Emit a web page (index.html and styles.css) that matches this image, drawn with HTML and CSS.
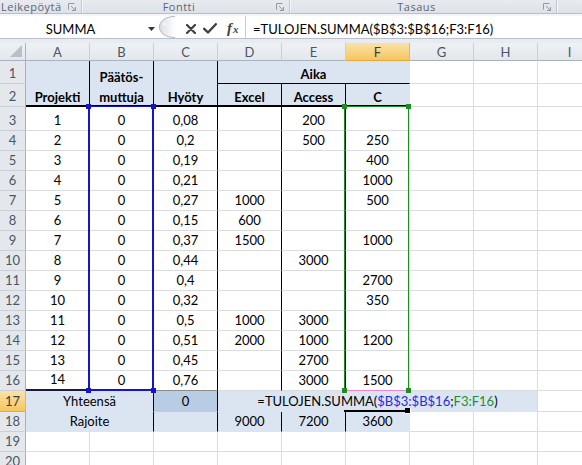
FILE: index.html
```html
<!DOCTYPE html>
<html>
<head>
<meta charset="utf-8">
<link rel="stylesheet" href="styles.css">
</head>
<body>
<div class="ribbon">
  <div class="grp g1"><span class="glabel left">Leikepöytä</span><svg class="launcher" width="8" height="8" viewBox="0 0 8 8"><path d="M0.5 6.5V0.5H6.5M3 3L7 7M7.5 4V7.5H4" fill="none" stroke="#8f99a6" stroke-width="1"/></svg></div>
  <div class="grp g2"><span class="glabel">Fontti</span><svg class="launcher" width="8" height="8" viewBox="0 0 8 8"><path d="M0.5 6.5V0.5H6.5M3 3L7 7M7.5 4V7.5H4" fill="none" stroke="#8f99a6" stroke-width="1"/></svg></div>
  <div class="grp g3"><span class="glabel">Tasaus</span><svg class="launcher" width="8" height="8" viewBox="0 0 8 8"><path d="M0.5 6.5V0.5H6.5M3 3L7 7M7.5 4V7.5H4" fill="none" stroke="#8f99a6" stroke-width="1"/></svg></div>
  <div class="grp g4"></div>
</div>
<div class="fspace"></div>
<div class="fbar">
  <div class="namebox"><span class="nbtext">SUMMA</span><svg class="nbarrow" width="7" height="4" viewBox="0 0 7 4"><path d="M0 0H7L3.5 4Z" fill="#333"/></svg></div>
  <svg class="grip" width="20" height="22" viewBox="0 0 20 22">
    <defs><linearGradient id="gg" x1="0" y1="0" x2="1" y2="0"><stop offset="0" stop-color="#d9dde3"/><stop offset="1" stop-color="#ffffff"/></linearGradient></defs>
    <path d="M17 0.5C6 0.5 1.5 6 1.5 11C1.5 16 6 21.5 17 21.5" fill="url(#gg)" stroke="#b3bac4" stroke-width="1"/>
    <ellipse cx="6.5" cy="8" rx="2" ry="1.5" fill="#f4f6f8"/>
  </svg>
  <div class="fbtns">
    <svg class="ix" width="10" height="10" viewBox="0 0 10 10"><path d="M1 1L9 9M9 1L1 9" stroke="#3f3f3f" stroke-width="2.2" stroke-linecap="round"/></svg>
    <svg class="iv" width="14" height="11" viewBox="0 0 14 11"><path d="M1.2 5.8L5 9.5L12.8 1.2" fill="none" stroke="#3f3f3f" stroke-width="2.4" stroke-linecap="round" stroke-linejoin="round"/></svg>
    <span class="fx"><i>f</i><span class="fxx">x</span></span>
  </div>
  <div class="finput">=TULOJEN.SUMMA($B$3:$B$16;F3:F16)</div>
</div>
<div class="fgap"></div>
<div class="sheet">
  <div class="corner"><svg width="14" height="14" viewBox="0 0 14 14"><path d="M1 13L13 1V13Z" fill="#b8bfc8"/></svg></div>
  <div class="ch">A</div><div class="ch">B</div><div class="ch">C</div><div class="ch">D</div><div class="ch">E</div><div class="ch sel">F</div><div class="ch">G</div><div class="ch">H</div><div class="ch">I</div>

  <div class="rh">1</div>
  <div class="c fill kr kb b p0 r2">Projekti</div>
  <div class="c fill kr kb b p0 r2 wrap"><span>Päätös-</span><span>muttuja</span></div>
  <div class="c fill kr kb b p0 r2">Hyöty</div>
  <div class="c fill kb1 b p1 s3">Aika</div>
  <div class="c"></div><div class="c"></div><div class="c"></div>

  <div class="rh">2</div>
  <div class="c fill kr kb b p0">Excel</div>
  <div class="c fill kr kb b p0">Access</div>
  <div class="c fill kb b p0">C</div>
  <div class="c"></div><div class="c"></div><div class="c"></div>

  <div class="rh">3</div><div class="c">1</div><div class="c">0</div><div class="c kr">0,08</div><div class="c kr"></div><div class="c kr">200</div><div class="c"></div><div class="c"></div><div class="c"></div><div class="c"></div>
  <div class="rh">4</div><div class="c">2</div><div class="c">0</div><div class="c kr">0,2</div><div class="c kr"></div><div class="c kr">500</div><div class="c">250</div><div class="c"></div><div class="c"></div><div class="c"></div>
  <div class="rh">5</div><div class="c">3</div><div class="c">0</div><div class="c kr">0,19</div><div class="c kr"></div><div class="c kr"></div><div class="c">400</div><div class="c"></div><div class="c"></div><div class="c"></div>
  <div class="rh">6</div><div class="c">4</div><div class="c">0</div><div class="c kr">0,21</div><div class="c kr"></div><div class="c kr"></div><div class="c">1000</div><div class="c"></div><div class="c"></div><div class="c"></div>
  <div class="rh">7</div><div class="c">5</div><div class="c">0</div><div class="c kr">0,27</div><div class="c kr">1000</div><div class="c kr"></div><div class="c">500</div><div class="c"></div><div class="c"></div><div class="c"></div>
  <div class="rh">8</div><div class="c">6</div><div class="c">0</div><div class="c kr">0,15</div><div class="c kr">600</div><div class="c kr"></div><div class="c"></div><div class="c"></div><div class="c"></div><div class="c"></div>
  <div class="rh">9</div><div class="c">7</div><div class="c">0</div><div class="c kr">0,37</div><div class="c kr">1500</div><div class="c kr"></div><div class="c">1000</div><div class="c"></div><div class="c"></div><div class="c"></div>
  <div class="rh">10</div><div class="c">8</div><div class="c">0</div><div class="c kr">0,44</div><div class="c kr"></div><div class="c kr">3000</div><div class="c"></div><div class="c"></div><div class="c"></div><div class="c"></div>
  <div class="rh">11</div><div class="c">9</div><div class="c">0</div><div class="c kr">0,4</div><div class="c kr"></div><div class="c kr"></div><div class="c">2700</div><div class="c"></div><div class="c"></div><div class="c"></div>
  <div class="rh">12</div><div class="c">10</div><div class="c">0</div><div class="c kr">0,32</div><div class="c kr"></div><div class="c kr"></div><div class="c">350</div><div class="c"></div><div class="c"></div><div class="c"></div>
  <div class="rh">13</div><div class="c">11</div><div class="c">0</div><div class="c kr">0,5</div><div class="c kr">1000</div><div class="c kr">3000</div><div class="c"></div><div class="c"></div><div class="c"></div><div class="c"></div>
  <div class="rh">14</div><div class="c">12</div><div class="c">0</div><div class="c kr">0,51</div><div class="c kr">2000</div><div class="c kr">1000</div><div class="c">1200</div><div class="c"></div><div class="c"></div><div class="c"></div>
  <div class="rh">15</div><div class="c">13</div><div class="c">0</div><div class="c kr">0,45</div><div class="c kr"></div><div class="c kr">2700</div><div class="c"></div><div class="c"></div><div class="c"></div><div class="c"></div>
  <div class="rh">16</div><div class="c a16">14</div><div class="c">0</div><div class="c kr c16">0,76</div><div class="c kr"></div><div class="c kr">3000</div><div class="c">1500</div><div class="c"></div><div class="c"></div><div class="c"></div>

  <div class="rh sel">17</div>
  <div class="c fill kr s2">Yhteensä</div>
  <div class="c dark kr">0</div>
  <div class="c fill s5 editor">=TULOJEN.SUMMA(<span class="refb">$B$3:$B$16</span>;<span class="refg">F3:F16</span>)</div>
  <div class="c"></div>

  <div class="rh">18</div>
  <div class="c fill kr s2">Rajoite</div>
  <div class="c fill kr"></div>
  <div class="c fill kr">9000</div>
  <div class="c fill kr">7200</div>
  <div class="c fill">3600</div>
  <div class="c"></div><div class="c"></div><div class="c"></div>

  <div class="rh">19</div><div class="c"></div><div class="c"></div><div class="c"></div><div class="c"></div><div class="c"></div><div class="c"></div><div class="c"></div><div class="c"></div><div class="c"></div>
  <div class="rh">20</div><div class="c"></div><div class="c"></div><div class="c"></div><div class="c"></div><div class="c"></div><div class="c"></div><div class="c"></div><div class="c"></div><div class="c"></div>

  <div class="range blue"><b class="ln lt"></b><b class="ln ll"></b><b class="ln lr"></b><b class="ln lb"></b><i class="h tl"></i><i class="h tr"></i><i class="h bl"></i><i class="h br"></i></div>
  <div class="range green"><b class="ln lt"></b><b class="ln ll"></b><b class="ln lr"></b><b class="ln lb pink"></b><i class="h tl"></i><i class="h tr"></i><i class="h bl"></i><i class="h br"></i></div>
  <div class="cursor"><i class="fillh"></i></div>
</div>
</body>
</html>
```
FILE: styles.css
```css
html, body { margin: 0; padding: 0; }
body {
  width: 582px;
  height: 465px;
  overflow: hidden;
  background: #ffffff;
  font-family: Lato, "Liberation Sans", sans-serif;
  color: #000;
}

/* ribbon group labels */
.ribbon {
  display: flex;
  height: 13px;
  background: linear-gradient(#e7ebf0, #dde2e8);
  border-bottom: 1px solid #b8bfc8;
  font-family: "Open Sans", "DejaVu Sans", sans-serif;
  font-size: 11px;
  letter-spacing: 0.5px;
  line-height: 13px;
  color: #5b6572;
  white-space: nowrap;
}
.grp {
  display: flex;
  align-items: center;
  border-right: 1px solid #c3c9d1;
  box-shadow: 1px 0 0 #f3f5f8;
}
.g1 { width: 81px; }
.g2 { width: 207px; }
.g3 { width: 266px; }
.g4 { flex: 1; border-right: none; box-shadow: none; }
.glabel { flex: 1; text-align: center; }
.glabel.left { text-align: left; padding-left: 1px; }
.launcher { margin-right: 5px; flex: none; }

.fspace { height: 2px; background: #f3f5f8; }

/* formula bar */
.fbar {
  display: flex;
  height: 22px;
  background: #ffffff;
  border-bottom: 1px solid #b9c0c9;
}
.namebox {
  width: 157px;
  display: flex;
  align-items: center;
  padding-top: 3px;
  box-sizing: border-box;
}
.nbtext { width: 141px; text-align: center; font-size: 13px; }
.nbarrow { margin-left: 7px; margin-top: 1px; }
.grip { margin-left: 1px; flex: none; }
.fbtns {
  display: flex;
  align-items: center;
  width: 67px;
  padding-top: 3px;
  box-sizing: border-box;
}
.ix { margin-left: 8px; }
.iv { margin-left: 7px; }
.fx {
  margin-left: 10px;
  font-family: "Liberation Serif", serif;
  font-weight: 700;
  font-size: 15px;
  color: #3f3f3f;
  line-height: 15px;
}
.fxx { font-style: italic; font-size: 11px; margin-left: 1px; }
.finput {
  flex: 1;
  border-left: 1px solid #c6ccd4;
  padding-left: 7px;
  padding-top: 3px;
  display: flex;
  align-items: center;
  font-size: 13px;
  white-space: nowrap;
}

.fgap { height: 4px; background: #e8ebf0; }

/* sheet */
.sheet {
  position: relative;
  display: grid;
  grid-template-columns: 26px repeat(9, 64px);
  grid-template-rows: 18px 23px 23px 24px repeat(13, 20px) 21px 20px 20px 20px;
  font-size: 13px;
}
.corner, .ch, .rh {
  box-sizing: border-box;
  background: linear-gradient(#eef1f4, #e3e7ec);
  color: #4a5565;
}
.corner {
  border-right: 1px solid #a9b3c0;
  border-bottom: 1px solid #a9b3c0;
  display: flex;
  align-items: flex-end;
  justify-content: flex-end;
  padding: 0 2px 2px 0;
}
.ch {
  border-right: 1px solid #cbd0d8;
  border-bottom: 1px solid #a9b3c0;
  display: flex;
  justify-content: center;
  align-items: flex-start;
  padding-top: 2px;
  line-height: 15px;
}
.rh {
  background: #e4e8ed;
  border-right: 1px solid #a9b3c0;
  border-bottom: 1px solid #cbd0d8;
  display: flex;
  justify-content: center;
  align-items: flex-end;
  padding-bottom: 2px;
  line-height: 15px;
}
.ch.sel, .rh.sel {
  background: linear-gradient(#fae3a9, #f5c65f);
  border-right-color: #e9b655;
  border-bottom-color: #e7a93c;
  color: #3d3d3d;
}

.c {
  box-sizing: border-box;
  border-right: 1px solid #dadcdd;
  border-bottom: 1px solid #dadcdd;
  display: flex;
  justify-content: center;
  align-items: flex-end;
  line-height: 15px;
  padding-bottom: 2px;
  white-space: nowrap;
}
.fill { background: #dbe5f1; border-color: #dbe5f1; }
.dark { background: #b8cce4; border-color: #b8cce4; }
.kr { border-right-color: #000; }
.kb { border-bottom: 2px solid #000; }
.kb1 { border-bottom-color: #000; }
.b { font-weight: 700; }
.p0 { padding-bottom: 0; }
.p1 { padding-bottom: 1px; }
.r2 { grid-row: span 2; }
.s2 { grid-column: span 2; }
.s3 { grid-column: span 3; }
.s5 { grid-column: span 5; }
.wrap { flex-direction: column; align-items: center; justify-content: flex-end; gap: 5px; }
.a16 { border-bottom: 2px solid #1a1a40; }
.c16 { border-bottom-color: #8c8c8c; }
.editor { border-right-color: #dadcdd; }
.refb { color: #2a2ae0; }
.refg { color: #22902a; }

/* overlays: reference-range highlights drawn over the grid */
.range {
  position: absolute;
  top: 63px;
  width: 66px;
  height: 285px;
  z-index: 2;
  pointer-events: none;
}
.range.blue { left: 88px; --rc: #1414c8; }
.range.green { left: 344px; width: 65px; --rc: #1e8c22; }
.ln { position: absolute; display: block; background: var(--rc); }
.ln.lt { left: 0; right: 0; top: 0; height: 1px; }
.ln.lb { left: 0; right: 0; bottom: 0; height: 2px; }
.ln.ll { left: 0; top: 0; bottom: 0; width: 1px; }
.ln.lr { right: 0; top: 0; bottom: 0; width: 1px; }
.blue .ln.ll, .blue .ln.lr { width: 2px; }
.ln.pink { background: #ef84c6; height: 1px; }
.h {
  position: absolute;
  width: 5px;
  height: 5px;
  background: var(--rc);
}
.h.tl { left: -2px; top: -2px; }
.h.tr { right: -2px; top: -2px; }
.h.bl { left: -2px; bottom: -2px; }
.h.br { right: -2px; bottom: -2px; }
.cursor {
  position: absolute;
  z-index: 2;
  left: 344px;
  top: 367px;
  width: 64px;
  height: 2px;
  background: #000;
}
.fillh {
  position: absolute;
  right: -3px;
  top: -2px;
  width: 5px;
  height: 5px;
  background: #000;
  border: 1px solid #fff;
  border-top: none;
  border-left: none;
}
```
